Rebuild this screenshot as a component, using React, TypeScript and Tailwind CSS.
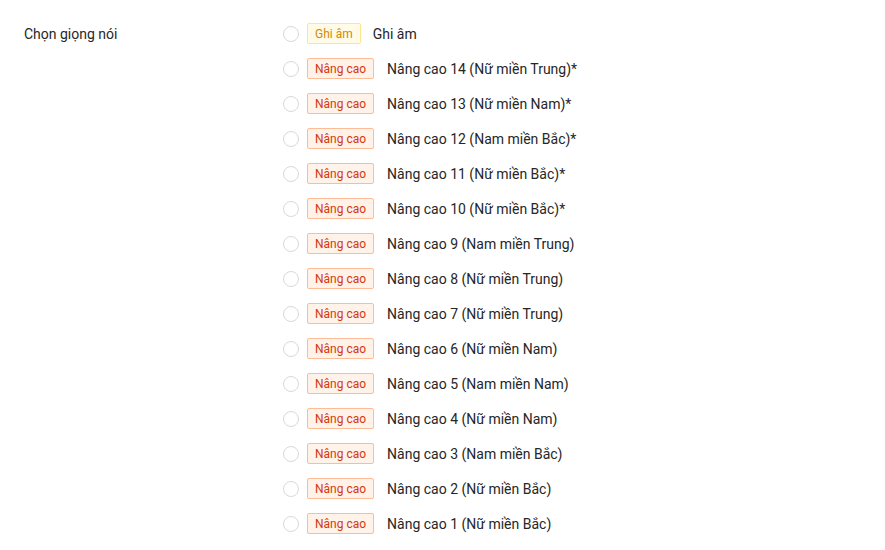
const voices = [
  "Nâng cao 14 (Nữ miền Trung)*",
  "Nâng cao 13 (Nữ miền Nam)*",
  "Nâng cao 12 (Nam miền Bắc)*",
  "Nâng cao 11 (Nữ miền Bắc)*",
  "Nâng cao 10 (Nữ miền Bắc)*",
  "Nâng cao 9 (Nam miền Trung)",
  "Nâng cao 8 (Nữ miền Trung)",
  "Nâng cao 7 (Nữ miền Trung)",
  "Nâng cao 6 (Nữ miền Nam)",
  "Nâng cao 5 (Nam miền Nam)",
  "Nâng cao 4 (Nữ miền Nam)",
  "Nâng cao 3 (Nam miền Bắc)",
  "Nâng cao 2 (Nữ miền Bắc)",
  "Nâng cao 1 (Nữ miền Bắc)",
];

function Radio() {
  return <span className="block h-4 w-4 flex-none rounded-full border border-[#d9d9d9] bg-white" />;
}

function Option({ tag, label, gold }: { tag: string; label: string; gold?: boolean }) {
  return (
    <label className="flex h-[35px] items-center">
      <Radio />
      {gold ? (
        <span className="ml-2 flex h-[21px] items-center rounded-[2px] border border-[#ffe58f] bg-[#fffbe6] px-[7px] text-xs text-[#d48806]">
          {tag}
        </span>
      ) : (
        <span className="ml-2 mr-px flex h-[21px] items-center rounded-[2px] border border-[#ffbb96] bg-[#fff2e8] px-[7px] text-xs text-[#d4380d]">
          {tag}
        </span>
      )}
      <span className="ml-3 text-sm text-[#262626]">{label}</span>
    </label>
  );
}

export default function App() {
  return (
    <div className="flex min-h-[550px] bg-white pt-4 font-['Roboto',sans-serif]">
      <div className="flex h-[35px] w-[283px] flex-none items-center pl-6 text-sm text-[#262626]">
        Chọn giọng nói
      </div>
      <div className="flex flex-col">
        <Option tag="Ghi âm" label="Ghi âm" gold />
        {voices.map((v) => (
          <Option key={v} tag="Nâng cao" label={v} />
        ))}
      </div>
    </div>
  );
}
